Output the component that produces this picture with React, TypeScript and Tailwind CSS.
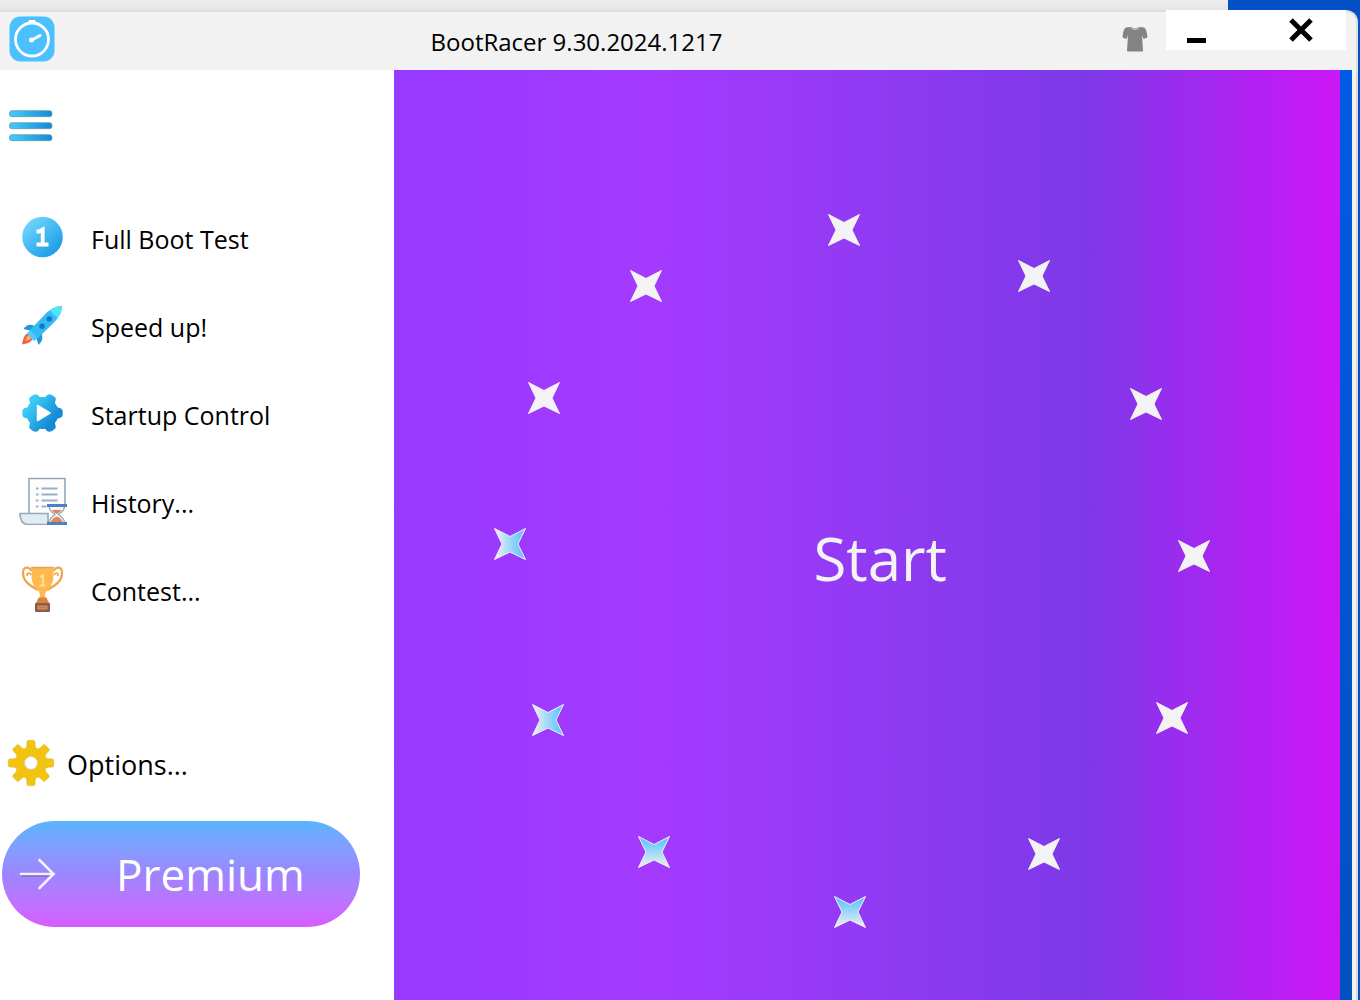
import React from "react";

type Star = { x: number; y: number; fill: "plain" | "side" | "down" };

const STARS: Star[] = [
  { x: 450, y: 160, fill: "plain" },
  { x: 640, y: 206, fill: "plain" },
  { x: 752, y: 334, fill: "plain" },
  { x: 800, y: 486, fill: "plain" },
  { x: 778, y: 648, fill: "plain" },
  { x: 650, y: 784, fill: "plain" },
  { x: 456, y: 842, fill: "down" },
  { x: 260, y: 782, fill: "down" },
  { x: 154, y: 650, fill: "side" },
  { x: 116, y: 474, fill: "side" },
  { x: 150, y: 328, fill: "plain" },
  { x: 252, y: 216, fill: "plain" },
];

const STAR_FILL = { plain: "#f3f3f3", side: "url(#starSide)", down: "url(#starDown)" };

function StarMark({ x, y, fill }: Star) {
  return (
    <svg
      viewBox="0 0 32 32"
      className="absolute size-8 -translate-x-1/2 -translate-y-1/2"
      style={{ left: `${(x / 946) * 100}%`, top: `${(y / 930) * 100}%` }}
      aria-hidden="true"
    >
      <path
        d="M.5.5 16 8.500 31.500.5 24 16l7.500 15.500L16 24 .5 31.500 8 16z"
        fill={STAR_FILL[fill]}
        stroke="#f3f3f3"
        strokeWidth="1"
      />
    </svg>
  );
}

function StarGradients() {
  return (
    <svg className="absolute size-0" aria-hidden="true">
      <defs>
        <linearGradient id="starSide">
          <stop offset="0" stopColor="#f0f0f0" />
          <stop offset="1" stopColor="#4cc2ff" />
        </linearGradient>
        <linearGradient id="starDown" x1="0" y1="0" x2="0" y2="1">
          <stop offset="0" stopColor="#4cc2ff" />
          <stop offset="1" stopColor="#f0f0f0" />
        </linearGradient>
      </defs>
    </svg>
  );
}

function StopwatchLogo() {
  return (
    <svg viewBox="0 0 46 46" className="size-[46px]" aria-hidden="true">
      <rect x="0.500" y="0.500" width="45" height="45" rx="11" fill="#4bc0ff" />
      <circle cx="23" cy="23.500" r="16.500" fill="none" stroke="#fff" strokeWidth="2.800" />
      <path d="M21 5.800h4" stroke="#fff" strokeWidth="3.500" strokeLinecap="round" />
      <path d="M23 24l8-4.500" stroke="#fff" strokeWidth="3" strokeLinecap="round" />
      <circle cx="22.500" cy="24" r="2.500" fill="#fff" />
    </svg>
  );
}

function MenuIcon() {
  return (
    <svg viewBox="0 0 44 32" className="h-8 w-11" aria-hidden="true">
      <defs>
        <linearGradient id="bar">
          <stop offset="0.100" stopColor="#3cc8f4" />
          <stop offset="1" stopColor="#1488d8" />
        </linearGradient>
      </defs>
      {[0.7, 12.7, 24.7].map((y) => (
        <rect key={y} x="0.500" y={y} width="42.500" height="6" rx="2.500" fill="url(#bar)" stroke="#6f9aa8" strokeWidth="0.800" />
      ))}
    </svg>
  );
}

function OneIcon() {
  return (
    <svg viewBox="0 0 48 48" className="size-12" aria-hidden="true">
      <defs>
        <linearGradient id="one" x1="0.150" y1="0.100" x2="0.850" y2="0.900">
          <stop offset="0" stopColor="#6fd6fb" />
          <stop offset="1" stopColor="#1a9be6" />
        </linearGradient>
      </defs>
      <circle cx="23.500" cy="24" r="20.300" fill="url(#one)" />
      <path d="M17.500 18.500h2.500l3.700-2v15M17.500 31.500h12" fill="none" stroke="#fff" strokeWidth="3.800" />
    </svg>
  );
}

function RocketIcon() {
  return (
    <svg viewBox="0 0 48 48" className="size-12" aria-hidden="true">
      <path d="M15 24.500c-5-2-8 0-10.500 3.500l8 2zM22.500 33c2 5 0 8-3 11l-2.500-8z" fill="#2295dd" />
      <path d="M9 32c-4 2-5 6-6 11.500 5-1 9-2 11-6z" fill="#f2604c" />
      <path d="M10 34c-2.500 1.500-3 3.500-3.500 6 2.500-.5 4.500-1 6-3.500z" fill="#f9b257" />
      <path d="M43 5c-9 .5-14 5-19 10.500L12 28l-3.500 4.500 7 7L20 36l12.500-12C38 18.500 42.500 14 43 5z" fill="#36baf2" />
      <path d="M43 5c-6 .5-9 2-12 4.500l7.500 8C41 14 42.700 11 43 5z" fill="#50e4fa" />
      <path d="M11 29.500l-3 3.500 7 7 3.500-3z" fill="#4fcdf6" />
      <circle cx="30.300" cy="18" r="2.700" fill="#0f75cf" />
      <circle cx="23" cy="25.300" r="2.700" fill="#0f75cf" />
    </svg>
  );
}

function PlayGearIcon() {
  return (
    <svg viewBox="0 0 48 48" className="size-12" aria-hidden="true">
      <defs>
        <linearGradient id="gear" x1="0" y1="0.100" x2="1" y2="0.900">
          <stop offset="0.250" stopColor="#3ccbf4" />
          <stop offset="0.700" stopColor="#158bd8" />
        </linearGradient>
        <clipPath id="gearShape">
          <circle cx="23.500" cy="24" r="16" />
          {[0, 60, 120, 180, 240, 300].map((a) => (
            <path
              key={a}
              transform={`rotate(${a} 23.500 24)`}
              d="M35 14c2 4 2.500 4.200 5 4.700q2.500.4 3.300 2 1 3.300 0 6.600-.8 1.600-3.300 2c-2.500.5-3 .7-5 4.700z"
            />
          ))}
        </clipPath>
      </defs>
      <rect width="48" height="48" fill="url(#gear)" clipPath="url(#gearShape)" />
      <path d="M18.500 16.500v15L31 24z" fill="#fff" stroke="#fff" strokeWidth="1.500" strokeLinejoin="round" />
    </svg>
  );
}

function HistoryIcon() {
  return (
    <svg viewBox="0 0 48 48" className="size-12" aria-hidden="true">
      <path d="M10 38V1.500h36V30" fill="#fdfdfe" stroke="#96a8b6" strokeWidth="1.600" />
      <path d="M1 36.500H29v11H9C3.500 47.500 1 43 1 36.500z" fill="#dfecf2" stroke="#94a8b5" strokeWidth="1.600" />
      <path d="M17 11.500h2.500M22.500 11.500h16M17 17.500h2.500M22.500 17.500h16M17 23.500h2.500M22.500 23.500h16M17 29.500h2.500M22.500 29.500h5" stroke="#9eafc4" strokeWidth="1.800" />
      <path d="M30 29c0 5 3 6.500 6 8.500-3 2-6 4-6 8.500h15.500c0-4.500-3-6.500-6-8.500 3-2 6-3.500 6-8.500z" fill="#f6f3f2" stroke="#9aa9b8" strokeWidth="1.300" />
      <path d="M33 33h9.500c-1 2-3 3-4.700 4-1.800-1-3.800-2-4.800-4zM32 45c.5-3 3.500-4.500 5.800-5.500 2.200 1 5.200 2.500 5.700 5.500z" fill="#df855b" />
      <path d="M28 28.500h20M28 46.500h20" stroke="#4d7fc4" strokeWidth="2.800" />
    </svg>
  );
}

function TrophyIcon() {
  return (
    <svg viewBox="0 0 48 48" className="size-12" aria-hidden="true">
      <path d="M13 6C9 .5 4 2 4 8c0 8 6 12 15 17M34 6c4-5.500 9-4 9 2 0 8-6 12-15 17" fill="none" stroke="#eda84d" strokeWidth="2.300" />
      <path d="M12 10c-2-3-5-2-3.500 1M35 10c2-3 5-2 3.500 1" fill="none" stroke="#eda84d" strokeWidth="1.800" />
      <path d="M12.500 2h22v9c0 7-3 11-6.500 14.500-2 2-2.500 5-1.500 8l4 4.500h-14l4-4.500c1-3 .5-6-1.500-8C15.500 22 12.500 18 12.500 11z" fill="#ffb950" />
      <path d="M12 2.500h23" stroke="#dda557" strokeWidth="1.500" />
      <path d="M21 12l3-1.500V20M20.500 20.500h6" fill="none" stroke="#ffe196" strokeWidth="2" />
      <path d="M19.500 32.500h8l2.500 6H17z" fill="#d7853e" />
      <rect x="16" y="38" width="15" height="9" rx="1" fill="#8c5b4f" />
      <rect x="19" y="41" width="9" height="3" fill="#b97c50" stroke="#d9a361" strokeWidth="0.800" />
    </svg>
  );
}

function GearIcon() {
  return (
    <svg viewBox="-24 -24 48 48" className="size-12" aria-hidden="true">
      {[0, 45, 90, 135, 180, 225, 270, 315].map((a) => (
        <path key={a} transform={`rotate(${a})`} d="M-6.500-13q2.300-2 2.300-5v-3q0-1.800 1.800-1.800h4.800q1.800 0 1.800 1.800v3q0 3 2.300 5z" fill="#f2c30f" stroke="#d9b84a" strokeWidth="0.400" />
      ))}
      <circle r="11" fill="none" stroke="#f2c30f" strokeWidth="10" />
      <circle r="6.500" fill="#fff" stroke="#d8cfa8" strokeWidth="1" />
    </svg>
  );
}

function ShirtIcon() {
  return (
    <svg viewBox="0 0 26 26" className="size-[26px]" aria-hidden="true">
      <path d="M8.500 1 4 1.500C2 2.500 1 6 .5 11.500l4 1.500L6 9l-1 15.500q0 1 1 1h14q1 0 1-1L20 9l1.500 4 4-1.500C25 6 24 2.500 22 1.500L17.500 1c-1 3.500-8 3.500-9 0z" fill="#838383" />
      <path d="M9 1c1.500 2.300 6.500 2.300 8 0" fill="none" stroke="#a5a5a5" strokeWidth="1.200" />
    </svg>
  );
}

const NAV = [
  { label: "Full Boot Test", Icon: OneIcon },
  { label: "Speed up!", Icon: RocketIcon },
  { label: "Startup Control", Icon: PlayGearIcon },
  { label: "History...", Icon: HistoryIcon },
  { label: "Contest...", Icon: TrophyIcon },
];

function TitleBar() {
  return (
    <header className="flex h-[60px] items-start rounded-tr-xl border-t-2 border-r-2 border-[#dedede] bg-[#f2f2f2] pr-[10px]">
      <div className="flex flex-1 items-start pl-[9px] pt-1">
        <StopwatchLogo />
        <h1 className="flex-1 pr-6 pt-2 text-center text-[24px] leading-9">BootRacer 9.30.2024.1217</h1>
        <button aria-label="Change theme" className="mr-[18px] mt-[10px]">
          <ShirtIcon />
        </button>
      </div>
      <div className="-mt-0.5 flex h-10 w-[180px] items-start justify-between bg-white pl-5 pr-8 pt-2">
        <button aria-label="Minimize">
          <svg viewBox="0 0 20 25" className="h-[25px] w-5" aria-hidden="true">
            <path d="M1 20h19v5H1z" />
          </svg>
        </button>
        <button aria-label="Close">
          <svg viewBox="0 0 26 24" className="h-6 w-[26px]" aria-hidden="true">
            <path d="M3 2 23 22M23 2 3 22" stroke="#000" strokeWidth="5" />
          </svg>
        </button>
      </div>
    </header>
  );
}

export default function App() {
  return (
    <div className="flex min-h-screen flex-col bg-[#0350c8] font-['Open_Sans','Segoe_UI',sans-serif] text-black">
      <div className="h-[10px] w-[1228px] bg-gradient-to-b from-[#eeeeee] to-[#e6e6e6]" />
      <div className="mr-0.5 flex flex-1 flex-col">
        <TitleBar />
        <div className="flex flex-1">
          <aside className="flex w-[394px] shrink-0 flex-col items-start bg-white">
            <button aria-label="Menu" className="ml-[9px] mt-10">
              <MenuIcon />
            </button>
            <nav className="mt-[51px] flex flex-col">
              {NAV.map(({ label, Icon }) => (
                <button key={label} className="flex h-[88px] items-center gap-6 pl-[19px] text-[25px]">
                  <Icon />
                  <span className="pt-1.5">{label}</span>
                </button>
              ))}
            </nav>
            <button className="mt-[106px] flex h-12 items-center gap-3 pl-[7px] text-[27px]">
              <GearIcon />
              <span className="pt-1">Options...</span>
            </button>
            <button className="ml-0.5 mt-[34px] flex h-[106px] w-[358px] items-center rounded-full bg-gradient-to-b from-[#58b4ff] via-[#9b86ff] to-[#d65cff] pl-4 text-white">
              <svg viewBox="0 0 38 32" className="h-8 w-[38px]" fill="none" aria-hidden="true">
                <path d="M3 17h31" stroke="#75669f" strokeWidth="3" />
                <path d="M3 16h33M21.500 2l14 14-14 14" stroke="#f4f0ff" strokeWidth="2.600" strokeLinecap="round" />
              </svg>
              <span className="pl-[60px] text-[44px] font-medium">Premium</span>
            </button>
          </aside>
          <main className="relative flex-1 bg-[linear-gradient(90deg,#9739ff_0%,#a43aff_27%,#933af4_48%,#7d39e8_73%,#9a2cee_83%,#b520f2_92%,#cd17f5_100%)]">
            <StarGradients />
            {STARS.map((s) => (
              <StarMark key={`${s.x}-${s.y}`} {...s} />
            ))}
            <button className="absolute left-[51.400%] top-[52.500%] -translate-x-1/2 -translate-y-1/2 text-[60px] leading-none text-[#f3f3f3]">
              Start
            </button>
          </main>
          <div className="w-3 bg-gradient-to-b from-[#005be4] to-[#0350c0]" />
          <div className="w-[6px] border-r-2 border-[#dadada] bg-[#f2f2f2]" />
        </div>
      </div>
    </div>
  );
}
